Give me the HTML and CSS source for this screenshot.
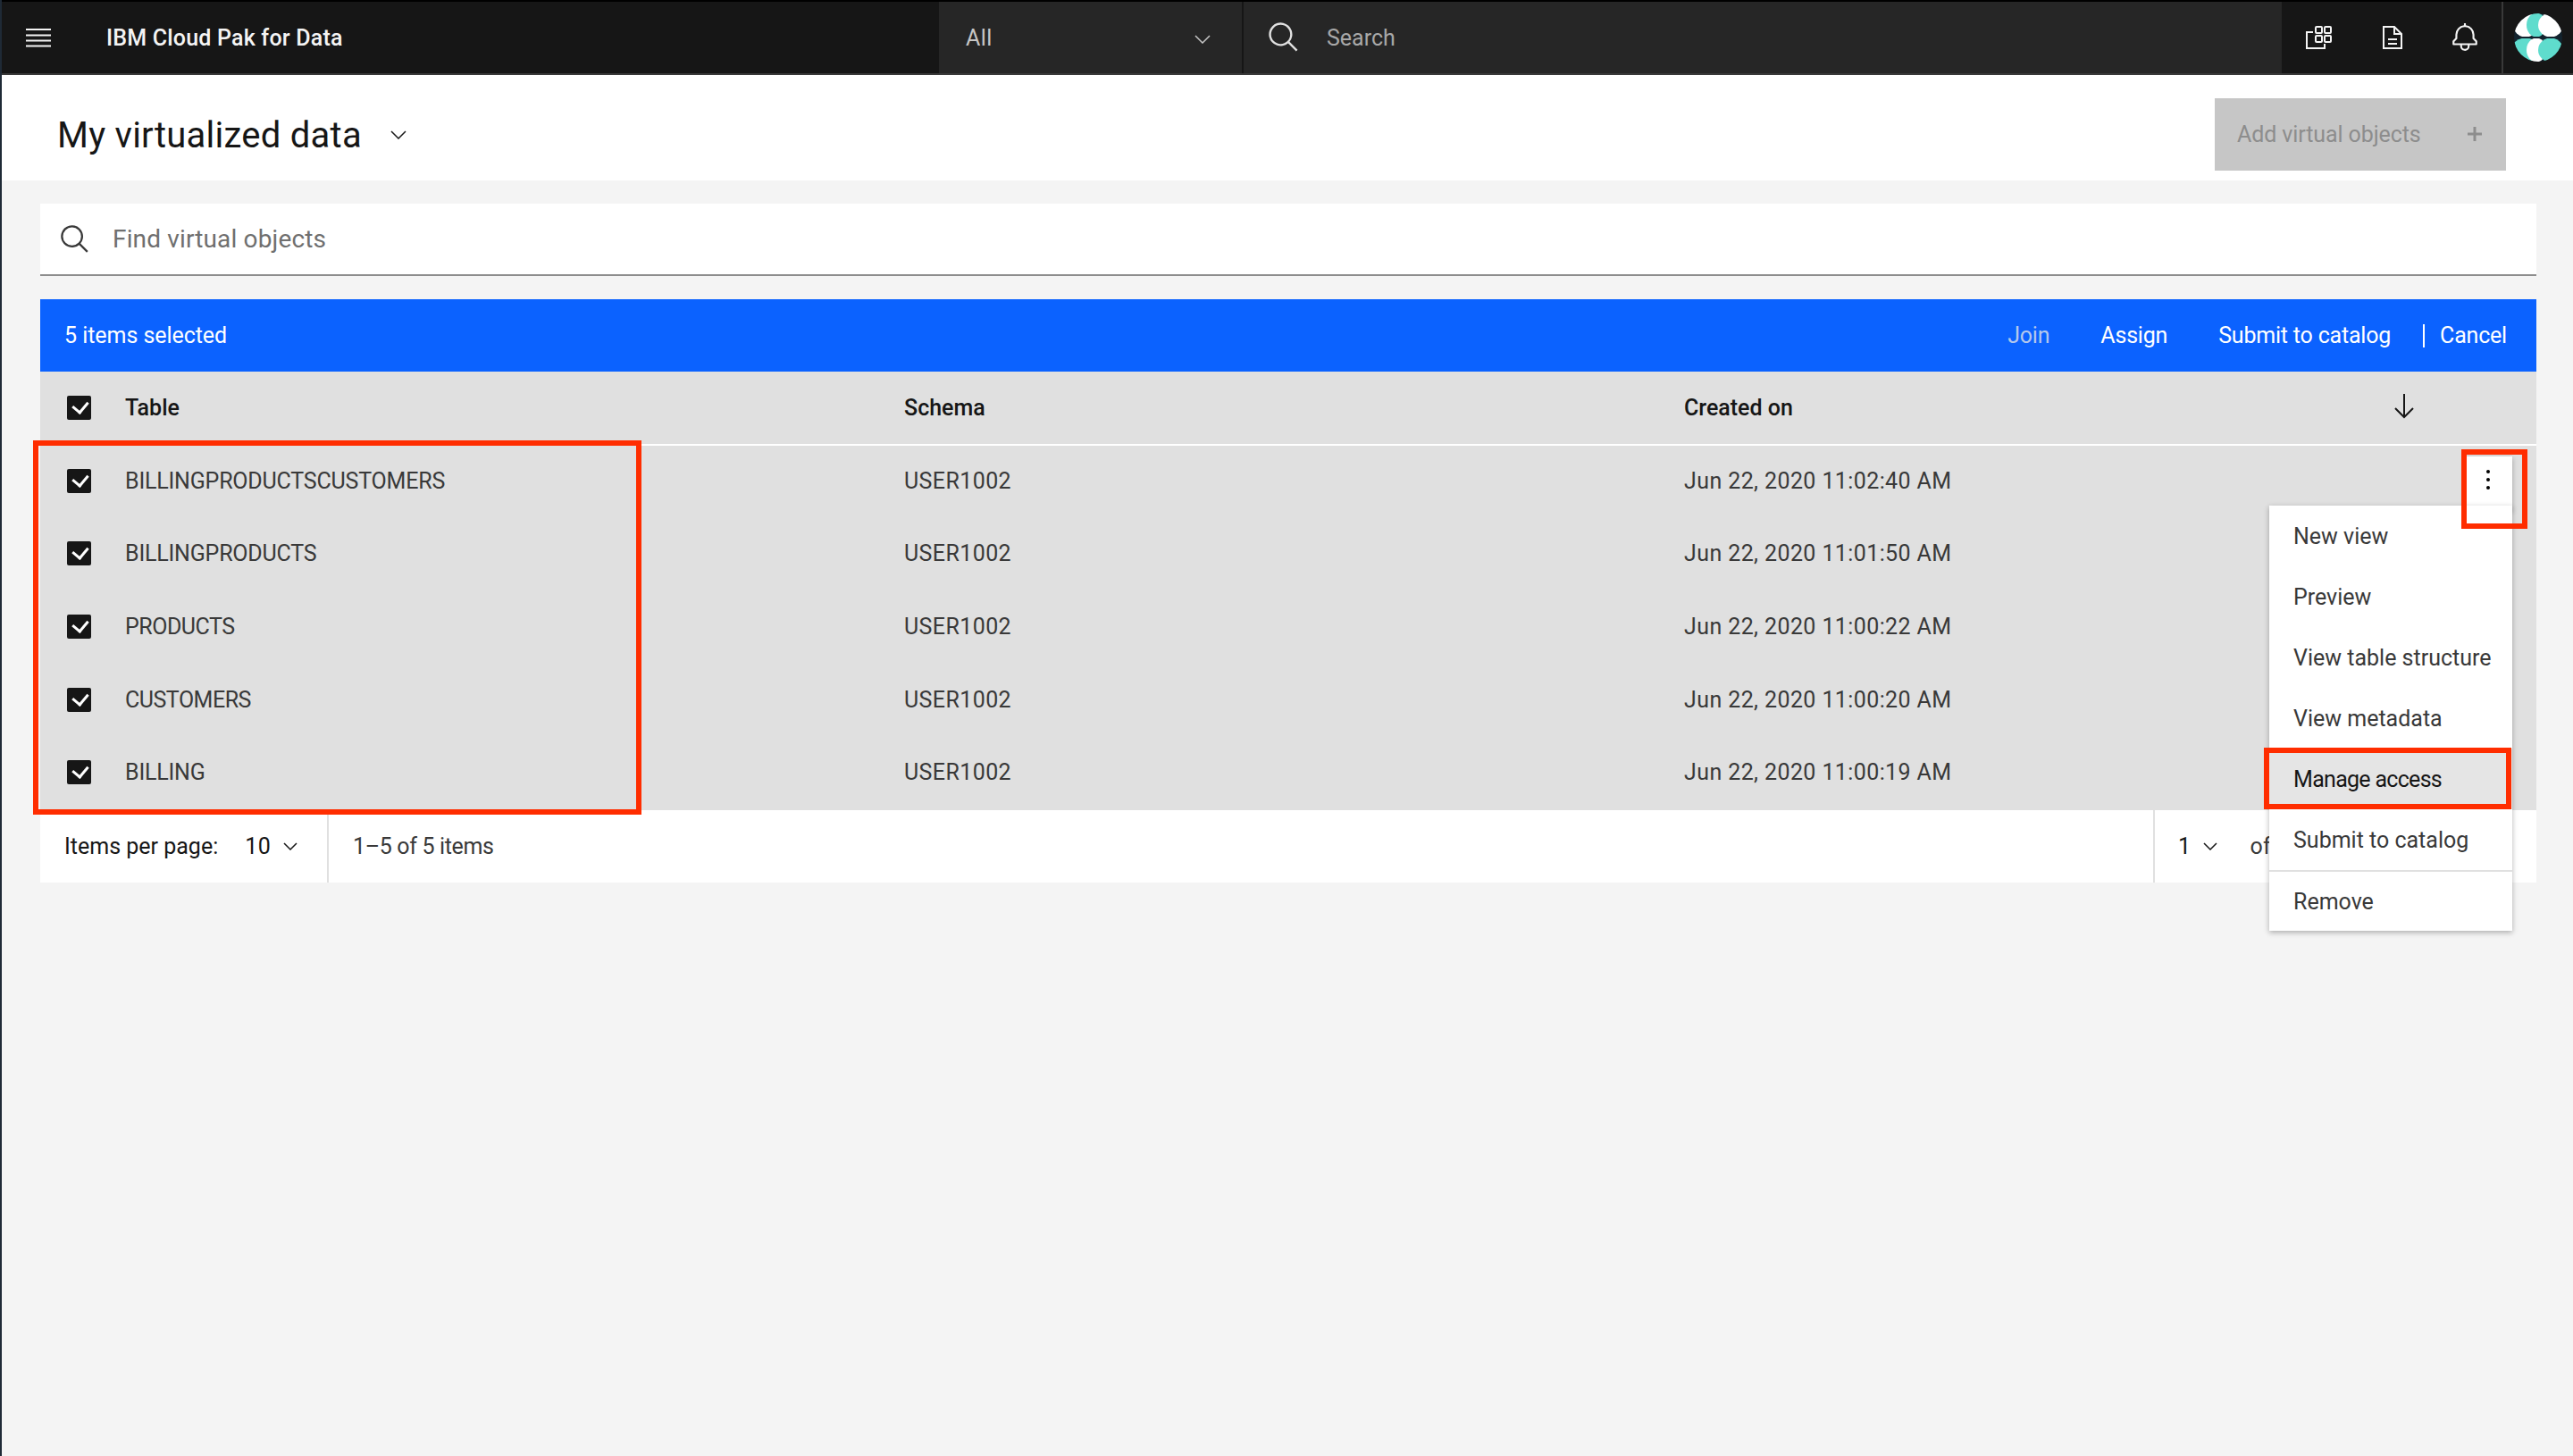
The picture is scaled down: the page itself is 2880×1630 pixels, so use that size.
FILE: index.html
```html
<!DOCTYPE html>
<html lang="en">
<head>
    <meta charset="UTF-8">
    <title>My virtualized data - IBM Cloud Pak for Data</title>
    <link rel="stylesheet" href="styles.css">
</head>
<body>
    <header class="topbar">
        <div class="brand">
            <svg class="hamburger" width="28" height="22" viewBox="0 0 28 22">
                <path d="M0 2h28M0 8.500h28M0 14.500h28M0 20.500h28" stroke="#f4f4f4" stroke-width="2" fill="none"/>
            </svg>
            <span class="brand-name">IBM Cloud Pak for Data</span>
        </div>
        <div class="scope">
            <span>All</span>
            <svg class="chevron" width="18" height="10" viewBox="0 0 18 10"><path d="M1 1l8 8 8-8" stroke="#c6c6c6" stroke-width="1.500" fill="none"/></svg>
        </div>
        <div class="global-search">
            <svg width="38" height="38" viewBox="0 0 32 32"><path fill="#e0e0e0" d="M29,27.5859l-7.5521-7.5521a11.0177,11.0177,0,1,0-1.4141,1.4141L27.5859,29ZM4,13a9,9,0,1,1,9,9A9.01,9.01,0,0,1,4,13Z"/></svg>
            <span>Search</span>
        </div>
        <div class="header-icons">
            <svg width="32" height="30" viewBox="0 0 32 30" fill="none" stroke="#f4f4f4" stroke-width="2">
                <path d="M9 9H2v18h20v-5"/>
                <rect x="12" y="3" width="7" height="7" rx="1"/><rect x="22" y="3" width="7" height="7" rx="1"/>
                <rect x="12" y="13" width="7" height="7" rx="1"/><rect x="22" y="13" width="7" height="7" rx="1"/>
            </svg>
            <svg width="22" height="26" viewBox="0 0 22 26" fill="none" stroke="#f4f4f4" stroke-width="2">
                <path d="M1 1h12l8 8v16H1zM13 1v8h8M6 15h10M6 20h10"/>
            </svg>
            <svg width="32" height="34" viewBox="2 0 28 32"><path fill="#f4f4f4" d="M28.7071,19.293,26,16.5859V13a10.0136,10.0136,0,0,0-9-9.9492V1H15V3.0508A10.0136,10.0136,0,0,0,6,13v3.5859L3.2929,19.293A1,1,0,0,0,3,20v3a1,1,0,0,0,1,1h7v.7768a5.152,5.152,0,0,0,4.5,5.1987A5.0057,5.0057,0,0,0,21,25V24h7a1,1,0,0,0,1-1V20A1,1,0,0,0,28.7071,19.293ZM19,25a3,3,0,0,1-6,0V24h6Zm8-3H5V20.4141L7.707,17.707A1,1,0,0,0,8,17V13a8,8,0,0,1,16,0v4a1,1,0,0,0,.293.707L27,20.4141Z"/></svg>
        </div>
        <div class="avatar-slot">
            <svg width="54" height="54" viewBox="0 0 54 54">
                <clipPath id="avatarClip"><circle cx="27" cy="27" r="27"/></clipPath>
                <clipPath id="avatarTop"><rect width="54" height="26"/></clipPath>
                <clipPath id="avatarBottom"><rect y="28" width="54" height="26"/></clipPath>
                <g clip-path="url(#avatarClip)">
                    <rect width="54" height="54" fill="#13232e"/>
                    <g clip-path="url(#avatarTop)">
                        <ellipse cx="13" cy="13" rx="14" ry="13.500" fill="#fff"/>
                        <ellipse cx="25" cy="13" rx="11" ry="13.500" fill="#5fdccd"/>
                        <ellipse cx="41" cy="13" rx="14" ry="13.500" fill="#fff"/>
                    </g>
                    <g clip-path="url(#avatarBottom)">
                        <ellipse cx="13" cy="41" rx="16" ry="13.500" fill="#5fdccd"/>
                        <ellipse cx="25" cy="41" rx="11" ry="13.500" fill="#fff"/>
                        <ellipse cx="41" cy="41" rx="14" ry="13.500" fill="#5fdccd"/>
                    </g>
                </g>
            </svg>
        </div>
    </header>

    <section class="titlebar">
        <div class="page-title">
            <h1>My virtualized data</h1>
            <svg width="18" height="10" viewBox="0 0 18 10"><path d="M1 1l8 8 8-8" stroke="#161616" stroke-width="1.500" fill="none"/></svg>
        </div>
        <div class="add-button">
            <span>Add virtual objects</span>
            <svg width="18" height="18" viewBox="0 0 18 18"><path d="M9 1v16M1 9h16" stroke="#8d8d8d" stroke-width="3" fill="none"/></svg>
        </div>
    </section>

    <main class="content">
        <div class="find-box">
            <svg width="36" height="36" viewBox="0 0 32 32"><path fill="#393939" d="M29,27.5859l-7.5521-7.5521a11.0177,11.0177,0,1,0-1.4141,1.4141L27.5859,29ZM4,13a9,9,0,1,1,9,9A9.01,9.01,0,0,1,4,13Z"/></svg>
            <span>Find virtual objects</span>
        </div>

        <div class="table-wrap">
            <div class="batch-bar">
                <span class="batch-count">5 items selected</span>
                <div class="batch-actions">
                    <span class="disabled">Join</span>
                    <span>Assign</span>
                    <span>Submit to catalog</span>
                    <span class="batch-cancel">Cancel</span>
                </div>
            </div>

            <div class="row head-row">
                <div class="check-cell"><span class="checkbox"></span></div>
                <div>Table</div>
                <div>Schema</div>
                <div>Created on</div>
                <div class="sort-cell">
                    <svg width="22" height="28" viewBox="0 0 22 28"><path d="M11 0v26M1 16l10 10 10-10" stroke="#161616" stroke-width="2" fill="none"/></svg>
                </div>
            </div>
            <div class="row body-row">
                <div class="check-cell"><span class="checkbox"></span></div>
                <div class="name-cell">BILLINGPRODUCTSCUSTOMERS</div>
                <div>USER1002</div>
                <div>Jun 22, 2020 11:02:40 AM</div>
            </div>
            <div class="row body-row">
                <div class="check-cell"><span class="checkbox"></span></div>
                <div class="name-cell">BILLINGPRODUCTS</div>
                <div>USER1002</div>
                <div>Jun 22, 2020 11:01:50 AM</div>
            </div>
            <div class="row body-row">
                <div class="check-cell"><span class="checkbox"></span></div>
                <div class="name-cell tight">PRODUCTS</div>
                <div>USER1002</div>
                <div>Jun 22, 2020 11:00:22 AM</div>
            </div>
            <div class="row body-row">
                <div class="check-cell"><span class="checkbox"></span></div>
                <div class="name-cell tight">CUSTOMERS</div>
                <div>USER1002</div>
                <div>Jun 22, 2020 11:00:20 AM</div>
            </div>
            <div class="row body-row">
                <div class="check-cell"><span class="checkbox"></span></div>
                <div class="name-cell">BILLING</div>
                <div>USER1002</div>
                <div>Jun 22, 2020 11:00:19 AM</div>
            </div>

            <div class="pager">
                <div class="pager-size">
                    <span class="pager-label">Items per page:</span>
                    <span class="pager-value">10</span>
                    <svg width="16" height="9" viewBox="0 0 16 9"><path d="M1 1l7 7 7-7" stroke="#161616" stroke-width="1.500" fill="none"/></svg>
                </div>
                <div class="pager-count">1–5 of 5 items</div>
                <div class="pager-page">
                    <span class="pager-value">1</span>
                    <svg width="16" height="9" viewBox="0 0 16 9"><path d="M1 1l7 7 7-7" stroke="#161616" stroke-width="1.500" fill="none"/></svg>
                    <span class="pager-of">of</span>
                </div>
            </div>

            <div class="kebab">
                <svg width="6" height="24" viewBox="0 0 6 24"><circle cx="3" cy="3" r="2"/><circle cx="3" cy="12" r="2"/><circle cx="3" cy="21" r="2"/></svg>
            </div>
            <ul class="menu">
                <li>New view</li>
                <li>Preview</li>
                <li>View table structure</li>
                <li>View metadata</li>
                <li class="active">Manage access</li>
                <li class="divided">Submit to catalog</li>
                <li class="last">Remove</li>
            </ul>

            <div class="callout callout-names"></div>
            <div class="callout callout-kebab"></div>
            <div class="callout callout-manage"></div>
        </div>
    </main>
</body>
</html>
```

FILE: styles.css
```css
* {
    box-sizing: border-box;
}
body {
    margin: 0;
    height: 100vh;
    overflow: hidden;
    border-left: 2px solid #1f2a36;
    background: #f4f4f4;
    color: #393939;
    font-family: Roboto, "Noto Sans", sans-serif;
    font-size: 25px;
    letter-spacing: 0.4px;
}

/* top bar */
.topbar {
    display: flex;
    height: 84px;
    background: #161616;
    border-top: 2px solid #000;
    border-bottom: 2px solid #393939;
    color: #f4f4f4;
}
.brand {
    display: flex;
    align-items: center;
    width: 1049px;
    padding-left: 27px;
}
.brand-name {
    margin-left: 62px;
    font-weight: 500;
    font-size: 25px;
    letter-spacing: 0.2px;
}
.scope {
    display: flex;
    align-items: center;
    justify-content: space-between;
    width: 339px;
    margin-right: 2px;
    padding: 0 35px 0 30px;
    background: #262626;
    color: #c6c6c6;
}
.scope .chevron {
    margin-top: 4px;
}
.global-search {
    display: flex;
    align-items: center;
    width: 1162px;
    padding-left: 26px;
    gap: 29px;
    background: #262626;
    color: #a8a8a8;
    letter-spacing: 0;
}
.header-icons {
    display: flex;
    align-items: center;
    width: 246px;
    padding-left: 26px;
    gap: 54.500px;
}
.avatar-slot {
    display: flex;
    align-items: center;
    justify-content: center;
    flex: 1;
    border-left: 2px solid #393939;
}

/* page title */
.titlebar {
    display: flex;
    align-items: center;
    justify-content: space-between;
    height: 118px;
    padding: 14px 75px 0 62px;
    background: #fff;
}
.page-title {
    display: flex;
    align-items: center;
    gap: 32px;
    margin-top: 2px;
    color: #161616;
}
.page-title h1 {
    margin: 0;
    font-size: 40px;
    font-weight: 400;
    letter-spacing: 0.25px;
}
.add-button {
    display: flex;
    align-items: center;
    justify-content: space-between;
    width: 326px;
    height: 81px;
    padding: 0 26px 0 25px;
    background: #c6c6c6;
    color: #8d8d8d;
    letter-spacing: -0.1px;
}

.content {
    padding: 26px 41px 0 43px;
}
.find-box {
    display: flex;
    align-items: center;
    gap: 24px;
    height: 81px;
    padding-left: 21px;
    background: #fff;
    border-bottom: 2px solid #8d8d8d;
    color: #6f6f6f;
    font-size: 28px;
    letter-spacing: 0.15px;
}

/* table */
.table-wrap {
    position: relative;
    margin-top: 26px;
}
.batch-bar {
    display: flex;
    align-items: center;
    justify-content: space-between;
    height: 81px;
    padding: 0 33px 0 27px;
    background: #0b62ff;
    color: #fff;
}
.batch-count {
    letter-spacing: -0.05px;
}
.batch-actions {
    display: flex;
    align-items: center;
    gap: 57px;
    letter-spacing: -0.2px;
}
.batch-actions .disabled {
    color: #b4c8ec;
}
.batch-cancel {
    margin-left: -21px;
    padding-left: 17px;
    border-left: 2px solid #fff;
    line-height: 26px;
}
.row {
    display: grid;
    grid-template-columns: 95px 872px 873px 1fr;
    align-items: center;
    background: #e0e0e0;
}
.head-row {
    position: relative;
    height: 83px;
    border-bottom: 2px solid #fff;
    color: #161616;
    font-weight: 500;
    letter-spacing: 0;
}
.body-row {
    height: 81.600px;
    padding-bottom: 3px;
}
.name-cell {
    letter-spacing: -0.2px;
}
.name-cell.tight {
    letter-spacing: -0.5px;
}
.check-cell {
    display: flex;
    padding-left: 30px;
}
.checkbox {
    position: relative;
    width: 27px;
    height: 27px;
    border-radius: 2px;
    background: #161616;
}
.checkbox::after {
    content: "";
    position: absolute;
    left: 7px;
    top: 5px;
    width: 13px;
    height: 9px;
    border-left: 3px solid #fff;
    border-bottom: 3px solid #fff;
    transform: rotate(-50deg);
}
.sort-cell {
    position: absolute;
    right: 137px;
    top: 25px;
    line-height: 0;
}

/* pagination */
.pager {
    display: flex;
    align-items: center;
    height: 81px;
    background: #fff;
}
.pager-size {
    display: flex;
    align-items: center;
    width: 323px;
    height: 100%;
    padding-left: 27px;
    border-right: 2px solid #e0e0e0;
    color: #161616;
}
.pager-label {
    letter-spacing: 0;
}
.pager-value {
    margin-left: 30px;
    margin-right: 14px;
    color: #161616;
}
.pager-count {
    padding-left: 27px;
    letter-spacing: -0.35px;
}
.pager-page {
    display: flex;
    align-items: center;
    height: 100%;
    width: 429px;
    margin-left: auto;
    border-left: 2px solid #e0e0e0;
    white-space: nowrap;
}
.pager-page .pager-value {
    margin-left: 26px;
}
.pager-of {
    margin-left: 36px;
}

/* overflow menu */
.kebab {
    position: absolute;
    left: 2715px;
    top: 176px;
    display: flex;
    justify-content: center;
    width: 52px;
    height: 60px;
    padding: 14px 2px 0 0;
    background: #fff;
    box-shadow: 0 2px 6px rgba(0, 0, 0, 0.3);
}
.menu {
    position: absolute;
    left: 2495px;
    top: 231px;
    width: 272px;
    margin: 0;
    padding: 0;
    list-style: none;
    background: #fff;
    box-shadow: 0 2px 6px rgba(0, 0, 0, 0.3);
    letter-spacing: 0;
}
.menu li {
    display: flex;
    align-items: center;
    height: 68px;
    padding-left: 27px;
}
.menu li.active {
    background: #e5e5e5;
    color: #161616;
    letter-spacing: -0.7px;
}
.menu li.divided {
    height: 70px;
    border-bottom: 2px solid #e0e0e0;
}
.menu li.last {
    height: 66px;
}

/* red annotation boxes */
.callout {
    position: absolute;
    border: 6px solid #ff2d00;
}
.callout-names {
    left: -8px;
    top: 158px;
    width: 681px;
    height: 419px;
}
.callout-kebab {
    left: 2710px;
    top: 168px;
    width: 74px;
    height: 89px;
}
.callout-manage {
    left: 2489px;
    top: 502px;
    width: 277px;
    height: 69px;
}
```
